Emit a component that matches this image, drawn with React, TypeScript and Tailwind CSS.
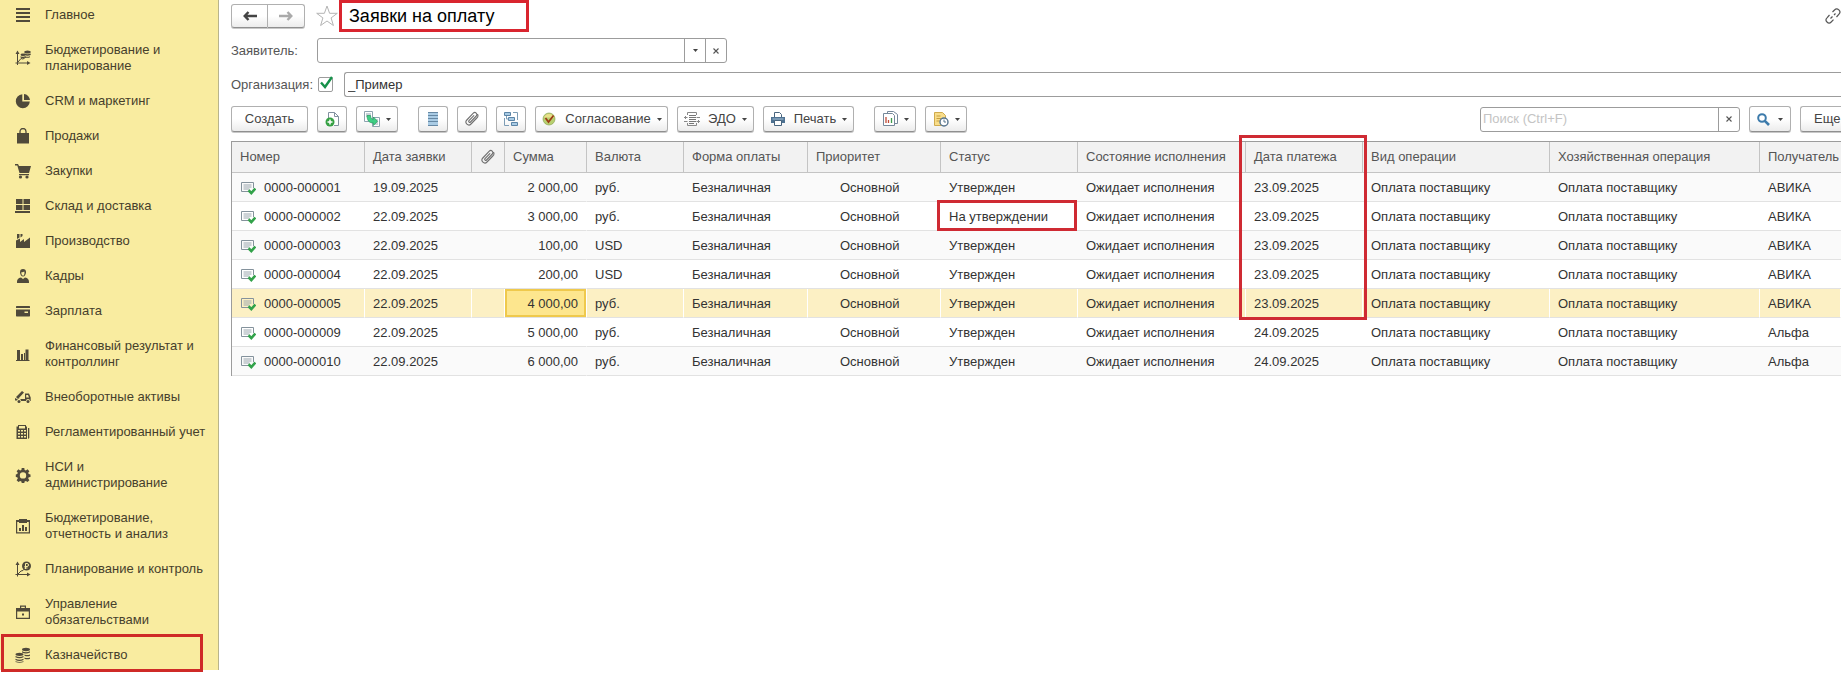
import React, { useState } from 'react';

type IconProps = { children: React.ReactNode };

const MenuIcon: React.FC<IconProps> = ({ children }) => (
  <svg viewBox="0 0 16 16" className="w-4 h-4 shrink-0 text-[#504a3a]" fill="currentColor" stroke="none" aria-hidden="true">
    {children}
  </svg>
);

const ToolIcon: React.FC<IconProps> = ({ children }) => (
  <svg viewBox="0 0 16 16" className="w-4 h-4 shrink-0" fill="none" aria-hidden="true">
    {children}
  </svg>
);

const Caret = () => (
  <svg viewBox="0 0 5 3" className="w-[5px] h-[3px] shrink-0" fill="#444" aria-hidden="true">
    <path d="M0 0h5L2.5 3z" />
  </svg>
);

const Cross = () => (
  <svg viewBox="0 0 6 6" className="w-[6px] h-[6px]" stroke="#555" strokeWidth="1.1" aria-hidden="true">
    <path d="M.5.5l5 5M5.5.5l-5 5" />
  </svg>
);

const Clip = () => (
  <ToolIcon>
    <path
      d="M12.800 7l-5.800 6a2.900 2.900 0 0 1-4.200-4l6.500-6.800a2 2 0 0 1 3 2.800l-5.800 6a1 1 0 0 1-1.500-1.400l4.800-5M12.800 7a3 3 0 0 0 .9-3.500"
      stroke="#707070"
      strokeWidth="1.1"
      strokeLinecap="round"
    />
  </ToolIcon>
);

const DocIcon = () => (
  <svg viewBox="0 0 16 14" className="w-4 h-[14px] shrink-0" fill="none" aria-hidden="true">
    <path d="M13.500 7V1.500H1.500v9h7" stroke="#84929c" />
    <path d="M3.500 4h8M3.500 6h8M3.500 8h6" stroke="#9aa6ae" />
    <path d="M8.500 9.300l2.800 2.700 4-4.500" stroke="#32a24a" strokeWidth="2.600" />
  </svg>
);

const menu = [
  {
    label: ['Главное'],
    icon: <path d="M1 1h14v2H1zM1 5h14v2H1zM1 9h14v2H1zM1 13h14v2H1z" />,
  },
  {
    label: ['Бюджетирование и', 'планирование'],
    icon: (
      <>
        <path d="M2 3h1v9.500h10v1H3V15H2v-1.500H.5v-1H2zM.5 4L2.500.5 4.500 4zM12 11l3.500 2-3.500 2z" />
        <path d="M3 12l3-3.500 2 .5 3-2" fill="none" stroke="currentColor" />
        <ellipse cx="12.500" cy="2" rx="3.200" ry="1.500" />
        <path d="M9.300 3.500q3.200 1.500 6.400 0V5q-3.200 1.500-6.400 0zM10 6.200q2.500 1 5 0v1q-2.500 1-5 0z" />
        <ellipse cx="8" cy="4.800" rx="2.500" ry="1.200" />
        <path d="M5.500 6.200q2.500 1.300 4.500 0v1.300q-2 1-4.500 0z" />
      </>
    ),
  },
  {
    label: ['CRM и маркетинг'],
    icon: <path d="M7.300 1.200v7.200h7.500A7 7 0 1 1 7.300 1.200zM9 1a6.500 6.500 0 0 1 6 6H9z" />,
  },
  {
    label: ['Продажи'],
    icon: (
      <>
        <path d="M2 5h12v10.500H2z" />
        <path d="M5 7V3.500a3 3 0 0 1 6 0V7" fill="none" stroke="currentColor" strokeWidth="1.300" />
      </>
    ),
  },
  {
    label: ['Закупки'],
    icon: (
      <>
        <path d="M0 1h3l1 2h12l-2 7H4.500L2.300 2.500H0zM4 11h10v1.200H4z" />
        <circle cx="5.500" cy="14" r="1.600" />
        <circle cx="12" cy="14" r="1.600" />
      </>
    ),
  },
  {
    label: ['Склад и доставка'],
    icon: <path d="M1 1h6.500v5H1zM8.500 1H15v5H8.500zM1 7h6.500v5H1zM8.500 7H15v5H8.500zM0 13h15v2H0z" />,
  },
  {
    label: ['Производство'],
    icon: <path d="M1 15V7.500l4-2V9l4-3v3l6-4.500V15zM2 1h2.500v3.500L2 6zM5.500 1h2v2l-2 1.500z" />,
  },
  {
    label: ['Кадры'],
    icon: (
      <>
        <path d="M8 1c2 0 3 1.200 3 3.200S9.600 8.500 8 8.500 5 6.200 5 4.200 6 1 8 1z" />
        <path d="M6.300 4.300c1.400 0 2.400-.6 3-.9.600 1.800-.1 4.300-1.300 4.300S6.200 6 6.300 4.300z" fill="#f9eca0" />
        <path d="M2 15c-.3-3.500 1-5 4-5.500L8 11l2-1.500c3 .5 4.300 2 4 5.500z" />
      </>
    ),
  },
  {
    label: ['Зарплата'],
    icon: <path d="M1.500 3h13l.5.500V5H1V3.500zM1 6.500h14V13l-.5.500h-13L1 13zM9.500 8.500V10H13V8.500z" fillRule="evenodd" />,
  },
  {
    label: ['Финансовый результат и', 'контроллинг'],
    icon: <path d="M1 14h13.500v1H1zM2 4h3v10H2zM6 8h2v6H6zM9 10V7h1v7H9zM10.500 3.500h3V14h-3z" />,
  },
  {
    label: ['Внеоборотные активы'],
    icon: (
      <>
        <path d="M1 8l6-6 2 1.500L3 10zM10 4.500h4l1.700 4V12H15a2 2 0 0 0-4 0H6a2 2 0 0 0-4-.5H0V9l2 1h8zM11.200 6v2.500H14L13 6z" fillRule="evenodd" />
        <circle cx="4" cy="12.500" r="1.500" />
        <circle cx="13" cy="12.500" r="1.500" />
      </>
    ),
  },
  {
    label: ['Регламентированный учет'],
    icon: (
      <path
        fillRule="evenodd"
        d="M3 1h8v1.500h1V15H1.500V2.500H3zM4 2v2.500h6V2zM3 6v1.500h2V6zM6 6v1.500h2V6zM9 6v1.500h2V6zM3 9v1.500h2V9zM6 9v1.500h2V9zM9 9v1.500h2V9zM3 12v1.500h2V12zM6 12v1.500h2V12zM9 12v1.500h2V12zM13 4h1.300v10L13 15z"
      />
    ),
  },
  {
    label: ['НСИ и', 'администрирование'],
    icon: (
      <path
        fillRule="evenodd"
        d="M6.700 1h2.600l.3 2 1.300.5 1.600-1.200 1.900 1.900-1.200 1.600.5 1.300 1.800.3v2.600l-1.800.3-.5 1.300 1.200 1.600-1.900 1.900-1.600-1.200-1.300.5-.3 1.600H6.700l-.3-1.600-1.300-.5-1.600 1.200-1.900-1.900 1.200-1.600-.5-1.300L.8 10V7.400l1.500-.3.500-1.300-1.200-1.600 1.900-1.900 1.600 1.200L6.400 3zM8 5.200a3.200 3.200 0 1 0 0 6.400 3.200 3.200 0 0 0 0-6.400z"
      />
    ),
  },
  {
    label: ['Бюджетирование,', 'отчетность и анализ'],
    icon: (
      <path
        fillRule="evenodd"
        d="M1 2h3V1h8v1h3v13.500H1zM2.200 4v10.300h11.600V4H12v1H4V4zM4 10h2v3H4zM7 7h2v6H7zM10 9h2v4h-2z"
      />
    ),
  },
  {
    label: ['Планирование и контроль'],
    icon: (
      <>
        <path d="M2 3h1v10h10v1H3v1.500H2V14H.5v-1H2zM.5 4L2.500.5 4.500 4zM12 11.500l3.500 2-3.500 2z" />
        <path d="M3 13l3-3 2-.5 2-2" fill="none" stroke="currentColor" />
        <circle cx="11.500" cy="5" r="4.500" />
        <path d="M10.500 8V2.500H12a1.400 1.400 0 0 1 0 3H9.500M9.500 7h3" fill="none" stroke="#f9eca0" />
      </>
    ),
  },
  {
    label: ['Управление', 'обязательствами'],
    icon: (
      <path
        fillRule="evenodd"
        d="M5 4V1.500h6V4h4v11H1V4zM6.200 2.700V4h3.600V2.700zM2.200 7.500v6.300h11.600V7.500zM7 9.500h2v2H7z"
      />
    ),
  },
  {
    label: ['Казначейство'],
    icon: (
      <>
        <ellipse cx="11" cy="2.500" rx="4" ry="1.700" />
        <path d="M7 4.300q4 2 8 0v1.300q-4 2-8 0zM9.500 7.400q2.700 1 5.500 0v1.300q-2.700 1-5.500 0zM9.500 10.500q2.700 1 5.500 0v1.300q-2.700 1-5.500 0z" />
        <ellipse cx="4.500" cy="7.300" rx="4" ry="1.600" />
        <path d="M.5 9q4 2 8 0v1.300q-4 2-8 0zM.5 11.700q4 2 8 0V13q-4 2-8 0zM.5 14.200q4 1.500 8 0v.8q-4 1.500-8 0z" />
      </>
    ),
  },
];

const columns = [
  { title: 'Номер', width: 'w-[133px]' },
  { title: 'Дата заявки', width: 'w-[107px]' },
  { title: '', width: 'w-[33px]' },
  { title: 'Сумма', width: 'w-[82px]' },
  { title: 'Валюта', width: 'w-[97px]' },
  { title: 'Форма оплаты', width: 'w-[124px]' },
  { title: 'Приоритет', width: 'w-[133px]' },
  { title: 'Статус', width: 'w-[137px]' },
  { title: 'Состояние исполнения', width: 'w-[168px]' },
  { title: 'Дата платежа', width: 'w-[117px]' },
  { title: 'Вид операции', width: 'w-[187px]' },
  { title: 'Хозяйственная операция', width: 'w-[210px]' },
  { title: 'Получатель', width: '' },
];

const rows = [
  { no: '0000-000001', date: '19.09.2025', sum: '2 000,00', cur: 'руб.', status: 'Утвержден', pay: '23.09.2025', to: 'АВИКА' },
  { no: '0000-000002', date: '22.09.2025', sum: '3 000,00', cur: 'руб.', status: 'На утверждении', pay: '23.09.2025', to: 'АВИКА' },
  { no: '0000-000003', date: '22.09.2025', sum: '100,00', cur: 'USD', status: 'Утвержден', pay: '23.09.2025', to: 'АВИКА' },
  { no: '0000-000004', date: '22.09.2025', sum: '200,00', cur: 'USD', status: 'Утвержден', pay: '23.09.2025', to: 'АВИКА' },
  { no: '0000-000005', date: '22.09.2025', sum: '4 000,00', cur: 'руб.', status: 'Утвержден', pay: '23.09.2025', to: 'АВИКА' },
  { no: '0000-000009', date: '22.09.2025', sum: '5 000,00', cur: 'руб.', status: 'Утвержден', pay: '24.09.2025', to: 'Альфа' },
  { no: '0000-000010', date: '22.09.2025', sum: '6 000,00', cur: 'руб.', status: 'Утвержден', pay: '24.09.2025', to: 'Альфа' },
];

const btn =
  'shrink-0 flex items-center justify-center border border-[#b0b0b0] border-b-[#8f8f8f] rounded-[3px] bg-linear-to-b from-white from-50% to-[#ececec] shadow-[0_1px_0_#c8c8c8] text-[#444]';

const Sidebar = () => (
  <nav className="w-[219px] shrink-0 bg-[#f9eca0] border-r border-[#b9b48c]">
    <ul>
      {menu.map((item, i) => (
        <li key={item.label[0]} className="relative">
          <a
            href="#"
            className={`flex items-center gap-[14px] pl-[15px] leading-4 text-[#46402c] ${i === 0 ? 'pt-[7px]' : 'pt-[10px]'} ${
              i === menu.length - 1 ? 'pb-[7px]' : 'pb-[9px]'
            }`}
          >
            <MenuIcon>{item.icon}</MenuIcon>
            <span>
              {item.label.map((line) => (
                <span key={line} className="block whitespace-nowrap">{line}</span>
              ))}
            </span>
          </a>
          {item.label[0] === 'Казначейство' && (
            <span className="absolute left-px -top-[3px] w-[202px] h-[38px] border-3 border-[#cf2a27] pointer-events-none" />
          )}
        </li>
      ))}
    </ul>
  </nav>
);

const Toolbar = () => (
  <div className="flex items-center mt-[9px] pl-3">
    <button className={`${btn} h-[26px] w-[77px]`}>Создать</button>
    <button className={`${btn} h-[26px] w-[30px] ml-[9px]`} aria-label="Скопировать">
      <ToolIcon>
        <path d="M4.500 7V1.500h6l4 4v9H10" stroke="#8291a0" fill="#fff" />
        <path d="M10.500 1.500v4h4" stroke="#8291a0" />
        <circle cx="6" cy="11" r="4.500" fill="#35a043" />
        <path d="M6 8.500v5M3.500 11h5" stroke="#fff" strokeWidth="1.500" />
      </ToolIcon>
    </button>
    <button className={`${btn} h-[26px] w-[42px] ml-[9px] gap-[6px]`} aria-label="Создать на основании">
      <ToolIcon>
        <path d="M.5.5h8v10h-8zM8.500 6.500h7v9h-7z" fill="#fff" stroke="#8ea3b0" />
        <path d="M2 3h5M2 5h5M11 9h3M11 11h3M11 13h3" stroke="#8ea3b0" />
        <path d="M3 4.500h3.500c.2 2.500.8 3.700 3 3.800V6l4 4.300-4 4.200V12C5 12 3.200 9.500 3 4.500z" fill="#3fce84" stroke="#249a5c" strokeWidth=".7" />
      </ToolIcon>
      <Caret />
    </button>
    <button className={`${btn} h-[26px] w-[30px] ml-5`} aria-label="Список">
      <ToolIcon>
        <path d="M3 1h10v14H3z" fill="#a9cbe4" />
        <path d="M3 1.500h10M3 4.500h10M3 7.500h10M3 10.500h10M3 14.500h10" stroke="#6688a4" />
      </ToolIcon>
    </button>
    <button className={`${btn} h-[26px] w-[30px] ml-[9px]`} aria-label="Присоединенные файлы"><Clip /></button>
    <button className={`${btn} h-[26px] w-[30px] ml-[9px]`} aria-label="Структура подчиненности">
      <ToolIcon>
        <path d="M1.500 1.500h6v3h-6zM5.500 6.500h6v3h-6zM8.500 11.500h6v3h-6z" fill="#a9cbe4" stroke="#5b84a6" />
        <path d="M10 1.500h4.500V9M1.500 7v7.500H6M3.500 5v3h2" stroke="#7c9cb5" />
      </ToolIcon>
    </button>
    <button className={`${btn} h-[26px] w-[133px] ml-[9px]`}>
      <ToolIcon>
        <circle cx="8" cy="8" r="6" fill="#b8cf70" stroke="#8da653" strokeWidth=".7" />
        <path d="M3 6.500a5.300 5.300 0 0 1 10 0z" fill="#e9e08a" />
        <path d="M4.500 7l3 4 5-6.500" stroke="#9b3b15" strokeWidth="1.700" />
      </ToolIcon>
      <span className="ml-2 mr-[6px]">Согласование</span>
      <Caret />
    </button>
    <button className={`${btn} h-[26px] w-[77px] ml-[9px]`}>
      <ToolIcon>
        <path d="M3.500 4V1.500h9V4M3.500 12v2.500h9V12" stroke="#888" />
        <path d="M5 4.500h7M5 6.500h7M5 8.500h7M5 10.500h7M5 12.500h5" stroke="#777" />
        <path d="M0 6.500h3.500M2 5L.5 6.500 2 8M0 10.500h3.500M12.500 6.500H16M12.500 10.500H16M14 9l1.500 1.500L14 12" stroke="#888" />
      </ToolIcon>
      <span className="ml-2 mr-[6px]">ЭДО</span>
      <Caret />
    </button>
    <button className={`${btn} h-[26px] w-[91px] ml-[9px]`}>
      <ToolIcon>
        <path d="M4.500 6V1.500h5l2 2V6" stroke="#48657e" fill="#fff" />
        <path d="M1 6h14v6H1z" fill="#4e7292" />
        <path d="M2.500 8h11" stroke="#a9c3d8" />
        <path d="M4.500 9.500h7v5h-7z" fill="#fff" stroke="#48657e" />
      </ToolIcon>
      <span className="ml-2 mr-[6px]">Печать</span>
      <Caret />
    </button>
    <button className={`${btn} h-[26px] w-[42px] ml-5 gap-[6px]`} aria-label="Отчеты">
      <ToolIcon>
        <path d="M5.500 2V.5h6l4 3v9H13" stroke="#76889a" fill="#fff" />
        <path d="M1.500 2.500h9l2 2v10h-11z" stroke="#76889a" fill="#fff" />
        <path d="M4 6v6M6.500 9v3" stroke="#c14b38" strokeWidth="1.300" />
        <path d="M9.500 7v5" stroke="#3f9b4d" strokeWidth="1.300" />
      </ToolIcon>
      <Caret />
    </button>
    <button className={`${btn} h-[26px] w-[42px] ml-[9px] gap-[6px]`} aria-label="Напоминание">
      <ToolIcon>
        <path d="M1.500 1.500h8l3 3v10h-11z" fill="#f8dd8a" stroke="#d0ab4d" />
        <path d="M3.500 5h4M3.500 7.500h5M3.500 10h3" stroke="#c79f3e" />
        <circle cx="11" cy="11" r="4" fill="#fff" stroke="#57748e" strokeWidth="1.400" />
        <path d="M11 8.500V11h2" stroke="#57748e" />
      </ToolIcon>
      <Caret />
    </button>
    <div className="flex-1" />
    <div className="flex w-[260px] h-[25px] shrink-0 border border-[#9c9c9c] rounded-[3px] bg-white">
      <input
        aria-label="Поиск"
        placeholder="Поиск (Ctrl+F)"
        className="flex-1 min-w-0 pl-[2px] outline-none placeholder:text-[#c4c4c4]"
      />
      <button aria-label="Очистить поиск" className="w-[21px] border-l border-[#9c9c9c] flex items-center justify-center"><Cross /></button>
    </div>
    <button className={`${btn} h-[26px] w-[42px] ml-[9px] gap-2`} aria-label="Найти">
      <svg viewBox="0 0 13 13" className="w-[13px] h-[13px]" fill="none" stroke="#3d7bab" aria-hidden="true">
        <circle cx="5" cy="5" r="3.800" strokeWidth="2" />
        <path d="M7.800 7.800l4.200 4.200" strokeWidth="2.600" />
      </svg>
      <Caret />
    </button>
    <button className={`${btn} h-[26px] w-[41px] ml-[9px] rounded-r-none border-r-0 pl-[13px] overflow-hidden`}>
      <span className="w-full text-left">Еще</span>
    </button>
  </div>
);

const App: React.FC = () => {
  const [applicant, setApplicant] = useState('');
  const [org, setOrg] = useState('_Пример');
  const [useOrg, setUseOrg] = useState(true);

  return (
    <div className="flex items-start min-h-screen bg-white overflow-hidden font-['Liberation_Sans',Arial,sans-serif] text-[13px]">
      <Sidebar />
      <main className="flex-1 min-w-0">
        <header className="flex items-start">
          <div className="flex mt-1 ml-3">
            <button aria-label="Назад" className={`${btn} h-6 w-[37px] rounded-r-none`}>
              <svg viewBox="0 0 14 10" className="w-[14px] h-[10px]" fill="none" stroke="#444" strokeWidth="2.400" aria-hidden="true">
                <path d="M14 5H2M5.500 1L1.700 5l3.800 4" />
              </svg>
            </button>
            <button aria-label="Вперед" className={`${btn} h-6 w-[37px] border-l-0 rounded-l-none`}>
              <svg viewBox="0 0 14 10" className="w-[14px] h-[10px]" fill="none" stroke="#aaa" strokeWidth="2.400" aria-hidden="true">
                <path d="M0 5h12M8.500 1l3.800 4-3.800 4" />
              </svg>
            </button>
          </div>
          <button aria-label="В избранное" className="ml-[11px] mt-[5px]">
            <svg viewBox="0 0 22 22" className="w-[22px] h-[22px]" fill="#fff" stroke="#b4b4b4" aria-hidden="true">
              <path d="M11 1l2.600 7.300H21.300l-6.200 4.600 2.300 7.600L11 16l-6.400 4.500 2.300-7.600L.7 8.300h7.700z" />
            </svg>
          </button>
          <h1 className="h-8 w-[190px] ml-px pl-[7px] border-3 border-[#d9252f] text-lg leading-[27px] text-black whitespace-nowrap">
            Заявки на оплату
          </h1>
          <div className="flex-1" />
          <button aria-label="Ссылка" className="mt-2">
            <svg viewBox="0 0 16 16" className="w-4 h-4" fill="none" stroke="#555" strokeWidth="1.200" aria-hidden="true">
              <path d="M7.500 4l2-2a2.900 2.900 0 0 1 4.500 4.200L11.500 9M4.500 7L2 9.800A2.900 2.900 0 0 0 6.200 14l2.300-2.300M5.500 10.500l2-2M9 7l1.500-1.500" />
            </svg>
          </button>
        </header>

        <div className="flex items-center mt-[6px] pl-3 text-[#555]">
          <label htmlFor="applicant" className="w-[86px]">Заявитель:</label>
          <div className="flex w-[410px] h-[25px] border border-[#9c9c9c] rounded-[3px]">
            <input
              id="applicant"
              value={applicant}
              onChange={(e) => setApplicant(e.target.value)}
              className="flex-1 min-w-0 px-1 outline-none text-[#333]"
            />
            <button aria-label="Выбрать" className="w-[21px] border-l border-[#9c9c9c] flex items-center justify-center"><Caret /></button>
            <button aria-label="Очистить" className="w-[21px] border-l border-[#9c9c9c] flex items-center justify-center"><Cross /></button>
          </div>
        </div>

        <div className="flex items-center mt-[9px] pl-3 text-[#555]">
          <label htmlFor="org" className="w-[87px]">Организация:</label>
          <span className="relative w-[15px] h-[15px] mr-[11px]">
            <input
              type="checkbox"
              aria-label="Отбор по организации"
              checked={useOrg}
              onChange={(e) => setUseOrg(e.target.checked)}
              className="block appearance-none w-[15px] h-[15px] border border-[#9c9c9c] rounded-[2px] bg-white"
            />
            {useOrg && (
              <svg viewBox="0 0 14 14" className="absolute left-px -top-px w-[14px] h-[14px] pointer-events-none" fill="none" aria-hidden="true">
                <path d="M2 6.500l4 4.500L13 1" stroke="#16914a" strokeWidth="2.400" />
              </svg>
            )}
          </span>
          <input
            id="org"
            value={org}
            onChange={(e) => setOrg(e.target.value)}
            className="flex-1 min-w-0 h-[25px] pl-[3px] border border-r-0 border-[#9c9c9c] rounded-l-[3px] outline-none text-[#333]"
          />
        </div>

        <Toolbar />

        <div className="mt-[9px] ml-3 border-t border-l border-[#9c9c9c]">
          <table className="w-full table-fixed border-separate border-spacing-0 whitespace-nowrap">
            <thead>
              <tr>
                {columns.map((c, i) => (
                  <th
                    key={i}
                    className={`${c.width} relative h-[31px] p-0 pl-2 text-left font-normal text-[#555] bg-[#f2f2f2] border-b border-r last:border-r-0 border-[#c4c4c4]`}
                  >
                    {i === 2 ? <Clip /> : c.title}
                    {c.title === 'Дата платежа' && (
                      <span className="absolute z-10 -left-[7px] -top-[7px] w-[128px] h-[185px] border-3 border-[#cf2a33] pointer-events-none" />
                    )}
                  </th>
                ))}
              </tr>
            </thead>
            <tbody>
              {rows.map((r, i) => {
                const selected = r.no === '0000-000005';
                const cell = `h-[29px] p-0 pt-0.5 pl-2 border-b ${
                  selected ? 'bg-[#fcf0c4] border-r border-r-white border-b-[#e2e2e2]' : 'border-[#e2e2e2]'
                }`;
                return (
                  <tr key={r.no} className={`text-[#333] ${i % 2 === 0 ? 'bg-[#fafafa]' : 'bg-white'}`}>
                    <td className={cell}>
                      <span className="flex items-center gap-2"><DocIcon />{r.no}</span>
                    </td>
                    <td className={cell}>{r.date}</td>
                    <td className={cell} />
                    <td
                      className={`h-[29px] p-0 pt-0.5 pr-2 text-right border-b border-r border-b-[#e2e2e2] ${
                        selected ? 'bg-[#fde68e] border-r-white shadow-[inset_0_0_0_2px_#efc94c]' : 'border-r-transparent'
                      }`}
                    >
                      {r.sum}
                    </td>
                    <td className={cell}>{r.cur}</td>
                    <td className={cell}>Безналичная</td>
                    <td className={cell}><span className="pl-6">Основной</span></td>
                    <td className={`${cell} relative`}>
                      {r.status}
                      {r.status === 'На утверждении' && (
                        <span className="absolute -left-[4px] -top-[2px] w-[140px] h-[31px] border-3 border-[#cf2a33] pointer-events-none" />
                      )}
                    </td>
                    <td className={cell}>Ожидает исполнения</td>
                    <td className={cell}>{r.pay}</td>
                    <td className={cell}>Оплата поставщику</td>
                    <td className={cell}>Оплата поставщику</td>
                    <td className={cell}>{r.to}</td>
                  </tr>
                );
              })}
            </tbody>
          </table>
        </div>
      </main>
    </div>
  );
};

export default App;
